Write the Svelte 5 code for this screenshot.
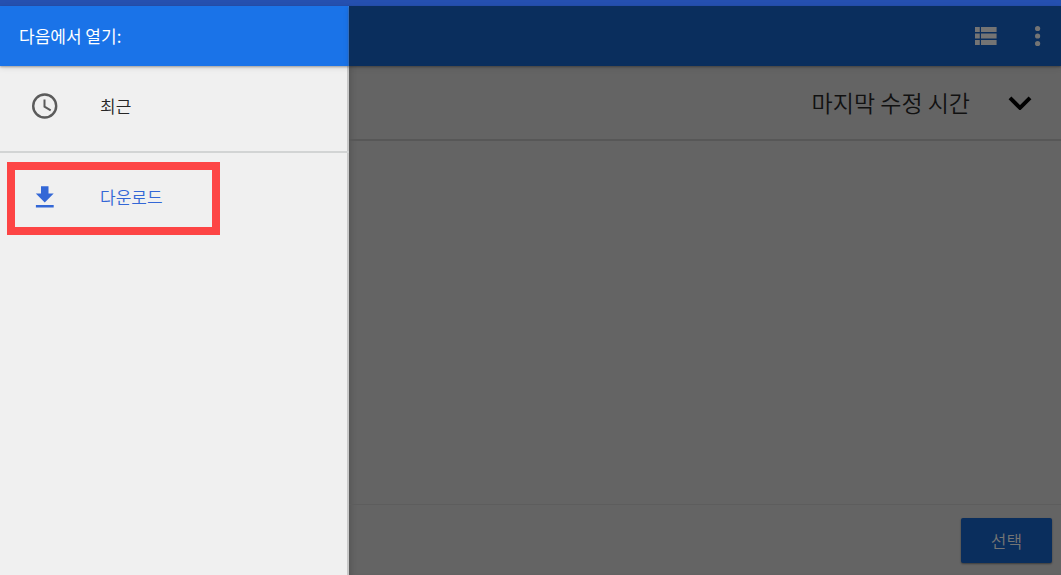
<script>
  const sortLabel = '마지막 수정 시간';
</script>

<div class="screen">
  <div class="status"></div>
  <div class="body">
    <nav class="drawer" aria-label="다음에서 열기">
      <header class="drawer-head">다음에서 열기:</header>
      <div class="group recent">
        <button class="item" type="button">
          <svg width="28" height="28" viewBox="0 0 28 28" fill="none" stroke="#5b5b5b" aria-hidden="true">
            <circle cx="13.7" cy="14" r="11.5" stroke-width="2.4" />
            <path d="M13.5 7.6v7l6.2 3.7" stroke-width="2" />
          </svg>
          <span>최근</span>
        </button>
      </div>
      <div class="group downloads">
        <button class="item active" type="button">
          <svg width="28" height="28" viewBox="0 0 28 28" fill="#3367d6" aria-hidden="true">
            <path d="M10 3.2h7.500v7.400h5.200L13.750 19.600 4.800 10.600H10zM4.900 22h17.800v2.600H4.900z" />
          </svg>
          <span>다운로드</span>
        </button>
      </div>
    </nav>

    <main class="content">
      <header class="toolbar">
        <button class="icon" type="button" aria-label="목록 보기">
          <svg width="22" height="18" viewBox="0 0 22 18" fill="#747474" aria-hidden="true">
            <path d="M0 0h4.800v5H0zM6 0h15.600v5H6zM0 6.500h4.800v5H0zM6 6.500h15.600v5H6zM0 13h4.800v5H0zM6 13h15.600v5H6z" />
          </svg>
        </button>
        <button class="icon" type="button" aria-label="옵션 더보기">
          <svg width="6" height="22" viewBox="0 0 6 22" fill="#747474" aria-hidden="true">
            <circle cx="2.6" cy="3.5" r="2.6" />
            <circle cx="2.6" cy="11" r="2.6" />
            <circle cx="2.6" cy="18.5" r="2.6" />
          </svg>
        </button>
      </header>
      <button class="sort" type="button">
        <span>{sortLabel}</span>
        <svg width="24" height="16" viewBox="0 0 24 16" fill="none" stroke="#000" stroke-width="4" aria-hidden="true">
          <path d="M2 3.8l10 10 10-10" />
        </svg>
      </button>
      <section class="files"></section>
      <footer class="actions">
        <button class="select" type="button">선택</button>
      </footer>
    </main>
  </div>
</div>

<style>
  :global(body) {
    margin: 0;
  }

  .screen {
    display: flex;
    flex-direction: column;
    min-height: 100vh;
    font-family: 'Noto Sans CJK KR', sans-serif;
    font-size: 17px;
    font-weight: 350;
    line-height: 24px;
  }

  button {
    margin: 0;
    padding: 0;
    border: 0;
    background: none;
    font: inherit;
    color: inherit;
    cursor: pointer;
  }

  svg {
    display: block;
    flex: none;
  }

  .status {
    height: 6px;
    background: #2550b0;
  }

  .body {
    display: flex;
    flex: 1;
  }

  .drawer {
    box-sizing: border-box;
    flex: 0 0 349px;
    background: #f0f0f0;
    box-shadow: inset -2px 0 #c8c8c8;
    color: #262626;
  }

  .drawer-head {
    box-sizing: border-box;
    height: 60px;
    padding: 18px 19px;
    background: #1a73e8;
    box-shadow: inset -1px 0 #3a7fdc, 0 1px 2px rgba(0, 0, 0, 0.3), 0 2px 6px rgba(0, 0, 0, 0.1);
    color: #fff;
    font-weight: 400;
  }

  .group {
    display: flex;
  }

  .recent {
    padding: 12px 7px 17px;
    border-bottom: 2px solid #d2d4d4;
  }

  .downloads {
    padding: 9px 7px;
  }

  .item {
    box-sizing: border-box;
    display: flex;
    align-items: center;
    gap: 41px;
    width: 213px;
    padding: 14px 24px;
    text-align: left;
  }

  .item.active {
    height: 73px;
    padding: 0 16px 3px;
    border: 8px solid #fd4545;
    color: #3367d6;
  }

  .content {
    display: flex;
    flex: 1;
    flex-direction: column;
    min-width: 0;
    background: #646464;
    box-shadow: inset 6px 0 6px -4px rgba(0, 0, 0, 0.15);
  }

  .toolbar {
    display: flex;
    align-items: center;
    justify-content: flex-end;
    gap: 38px;
    height: 60px;
    padding-right: 20px;
    background: #0a2e5d;
    box-shadow: 0 1px 2px rgba(0, 0, 0, 0.3), 0 2px 6px rgba(0, 0, 0, 0.1);
  }

  .sort {
    box-sizing: border-box;
    display: flex;
    align-items: center;
    justify-content: flex-end;
    gap: 38px;
    height: 75px;
    padding: 0 29px 1px 0;
    border-bottom: 2px solid #575757;
    color: #111;
    font-size: 23px;
    line-height: 32px;
  }

  .files {
    flex: 1;
  }

  .actions {
    display: flex;
    justify-content: flex-end;
    padding: 13px 9px 12px;
    border-top: 1px solid #5d5d5d;
  }

  .select {
    width: 91px;
    height: 45px;
    border-radius: 2px;
    background: #0a2e5d;
    box-shadow: 0 1px 2px rgba(0, 0, 0, 0.4);
    color: #747474;
  }
</style>
